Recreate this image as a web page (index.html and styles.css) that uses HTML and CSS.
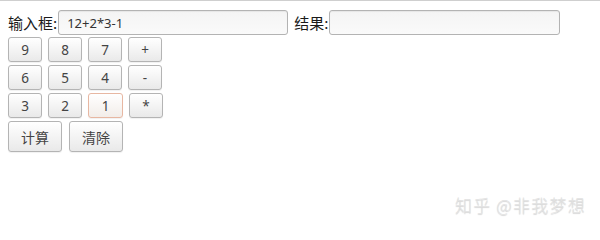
FILE: index.html
```html
<!DOCTYPE html>
<html lang="zh">
<head>
<meta charset="utf-8">
<title>计算器</title>
<link rel="stylesheet" href="styles.css">
</head>
<body>
<div class="page">
  <div class="top-row">
    <label class="lbl">输入框:</label><input class="field" type="text" value="12+2*3-1">
    <label class="lbl lbl-result">结果:</label><input class="field field-result" type="text" value="">
  </div>
  <div class="keypad">
    <div class="keys">
      <button class="key">9</button><button class="key">8</button><button class="key">7</button><button class="key">+</button>
    </div>
    <div class="keys">
      <button class="key">6</button><button class="key">5</button><button class="key">4</button><button class="key">-</button>
    </div>
    <div class="keys">
      <button class="key">3</button><button class="key">2</button><button class="key key-focus">1</button><button class="key">*</button>
    </div>
    <div class="keys keys-action">
      <button class="key key-wide">计算</button><button class="key key-wide">清除</button>
    </div>
  </div>
</div>
<div class="watermark">知乎 @非我梦想</div>
</body>
</html>
```
FILE: styles.css
```css
html, body {
  margin: 0;
  padding: 0;
  background: #fff;
}
body {
  position: relative;
  width: 600px;
  height: 227px;
  overflow: hidden;
  border-top: 1px solid #cfcfcf;
  box-sizing: border-box;
  font-family: "Noto Sans", "Open Sans", "Noto Sans CJK SC", sans-serif;
  color: #222;
}
.page {
  padding: 9px 8px 0 8px;
}
.top-row {
  display: flex;
  align-items: center;
  height: 25px;
}
.lbl {
  font-family: "Noto Sans CJK SC", sans-serif;
  font-size: 15px;
  color: #1a1a1a;
  line-height: 25px;
  margin-right: 1px;
}
.lbl-result {
  margin-left: 6px;
}
.field {
  box-sizing: border-box;
  width: 230px;
  height: 25px;
  margin: 0;
  padding: 0 8px;
  border: 1px solid #b3b3b3;
  border-radius: 3px;
  background: linear-gradient(#f4f4f4, #fafafa);
  font-family: "Noto Sans", "Open Sans", sans-serif;
  font-size: 13px;
  color: #333;
  box-shadow: inset 0 1px 1px rgba(0,0,0,0.06);
}
.field-result {
  width: 231px;
}
.keypad {
  display: flex;
  flex-direction: column;
  gap: 3px;
  margin-top: 2px;
}
.keys {
  display: flex;
  gap: 6px;
}
.key {
  box-sizing: border-box;
  width: 34px;
  height: 25px;
  margin: 0;
  padding: 0;
  border: 1px solid #b4b4b4;
  border-radius: 3px;
  background: linear-gradient(#ffffff, #e9e9e9);
  font-family: "Noto Sans", "Open Sans", sans-serif;
  font-size: 13.5px;
  color: #444;
  box-shadow: 0 1px 1px rgba(0,0,0,0.06);
}
.key-focus {
  border-color: #e7b7a2;
  background: linear-gradient(#ffffff, #f2ede9);
  width: 35px;
}
.keys-action {
  gap: 7px;
}
.key-wide {
  width: 54px;
  height: 31px;
  font-family: "Noto Sans CJK SC", sans-serif;
  font-size: 14px;
  color: #444;
}
.watermark {
  position: absolute;
  left: 455px;
  top: 191px;
  font-family: "Noto Sans CJK SC", sans-serif;
  font-size: 17px;
  font-weight: 300;
  color: #e2e2e2;
  text-shadow: 0 1px 1px rgba(0,0,0,0.2);
  letter-spacing: 1.2px;
  white-space: nowrap;
}
```
